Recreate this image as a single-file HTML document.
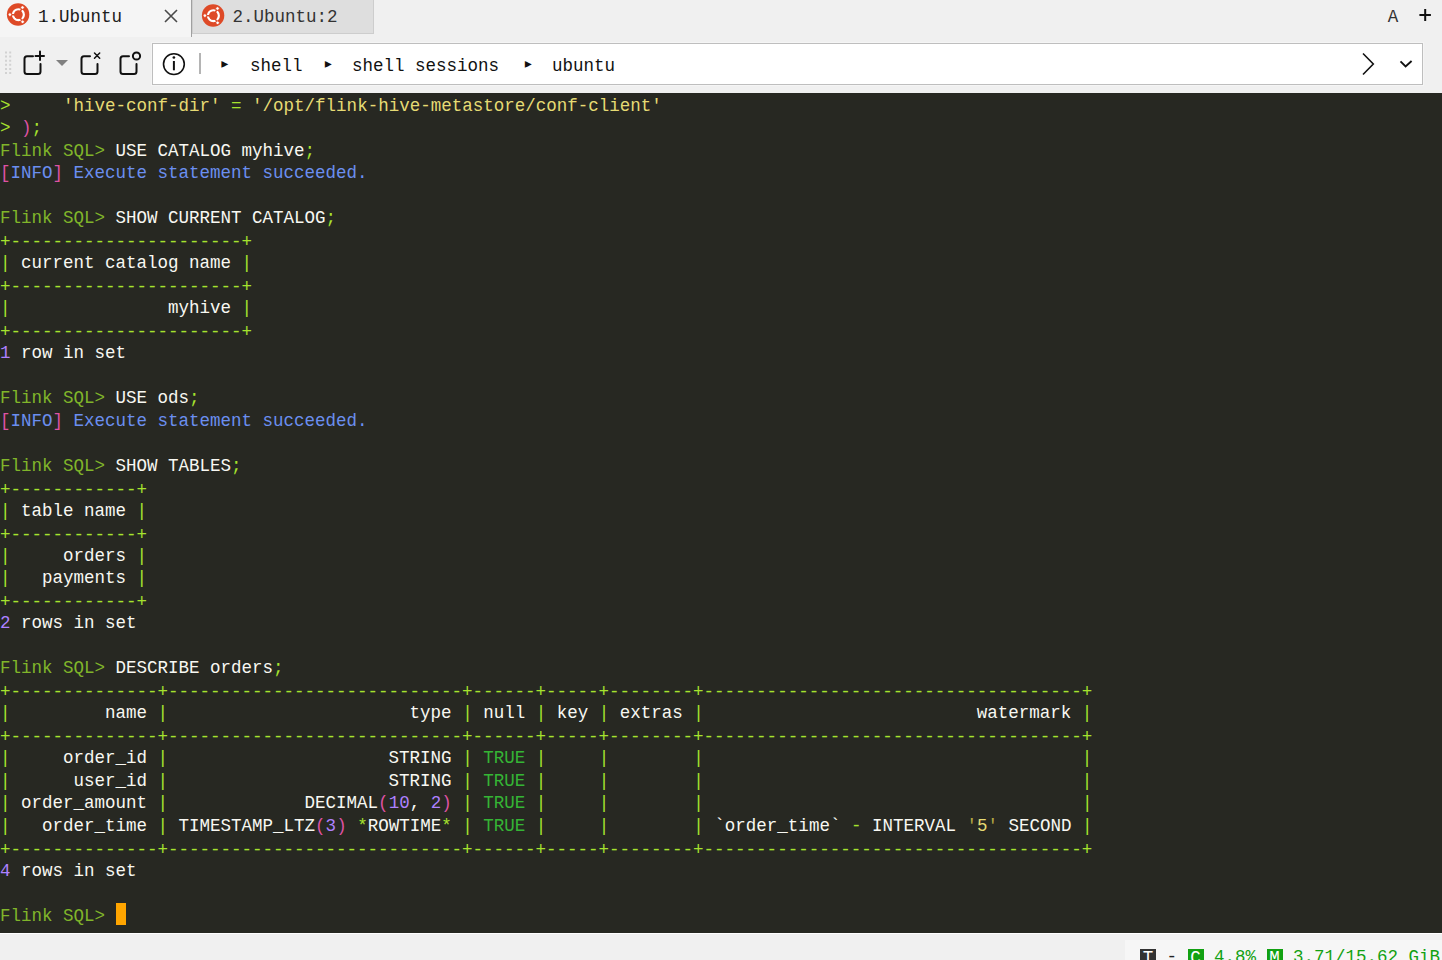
<!DOCTYPE html>
<html lang="en">
<head>
<meta charset="utf-8">
<title>1.Ubuntu</title>
<style>
html,body{margin:0;padding:0;}
body{width:1442px;height:960px;overflow:hidden;background:#f0f0f0;position:relative;
  font-family:"Liberation Mono","Liberation Mono","DejaVu Sans Mono",monospace;font-size:17.5px;color:#1e1e1e;}
.abs{position:absolute;}
#tab1{left:0;top:0;width:191px;height:37px;background:#f5f5f5;}
#tabsep{left:191px;top:0;width:1px;height:37px;background:#a0a0a0;}
#tab2{left:192px;top:0;width:182px;height:34px;background:#dedede;border:1px solid #cdcdcd;border-top:none;box-sizing:border-box;}
.tabtxt{top:5.5px;line-height:23px;white-space:pre;color:#202020;}
#addr{left:152px;top:43px;width:1271px;height:42px;background:#fff;border:1px solid #bebebe;box-sizing:border-box;box-shadow:0 0 0 1px #f5f5f5;}
.crumb{top:54.5px;line-height:23px;white-space:pre;color:#111;}
#term{left:0;top:93px;width:1442px;height:840px;border-bottom:1px solid #fff;background:#272822;overflow:hidden;}
#term pre{margin:0;padding:0;position:absolute;left:0;top:1.5px;font:inherit;line-height:22.5px;color:#f8f8f2;white-space:pre;}
.g{color:#a6e22e}.p{color:#80b52a}.y{color:#e6db74}.b{color:#6b8ff0}.k{color:#de52a2}.v{color:#ae81ff}.t{color:#35b535}.q{color:#b5a642}
.cur{background:#ffa500;display:inline-block;width:10px;height:22px;vertical-align:top;position:relative;top:-2px;left:0.5px}
.br{position:relative;top:1.5px}
#status{left:1125px;top:940px;width:317px;height:20px;background:#f6f6f6;}
.st{top:945.5px;line-height:23px;white-space:pre;color:#12a112;}
.bx{display:inline-block;width:16px;text-align:center;color:#fff;background:#12a112;height:18px;line-height:18px;margin-top:3.5px;vertical-align:top}
</style>
</head>
<body>
<div id="tab1" class="abs"></div>
<div id="tabsep" class="abs"></div>
<div id="tab2" class="abs"></div>
<svg class="abs" style="left:4px;top:0px" width="30" height="30" viewBox="0 0 30 30"><circle cx="14.1" cy="14.5" r="11.2" fill="#de4a27"/><circle cx="14.4" cy="14.7" r="5.35" fill="none" stroke="#fff" stroke-width="2.4"/><path d="M14.4 14.7 L6 14.7 M14.4 14.7 L18.6 7.4 M14.4 14.7 L18.6 22" stroke="#de4a27" stroke-width="1.5" fill="none"/><circle cx="14.4" cy="14.7" r="4.1" fill="#de4a27"/><g fill="#fff" stroke="#de4a27" stroke-width="0.9"><circle cx="5.9" cy="14.6" r="1.8"/><circle cx="18.5" cy="7.5" r="1.8"/><circle cx="18.6" cy="21.8" r="1.8"/></g></svg>
<div class="abs tabtxt" style="left:38px">1.Ubuntu</div>
<svg class="abs" style="left:162.600px;top:7.500px" width="16" height="16" viewBox="0 0 16 16"><path d="M2 2 L14 14 M14 2 L2 14" stroke="#4a4a4a" stroke-width="1.6" fill="none"/></svg>
<svg class="abs" style="left:198.8px;top:0.5px" width="30" height="30" viewBox="0 0 30 30"><circle cx="14.1" cy="14.5" r="11.2" fill="#de4a27"/><circle cx="14.4" cy="14.7" r="5.35" fill="none" stroke="#fff" stroke-width="2.4"/><path d="M14.4 14.7 L6 14.7 M14.4 14.7 L18.6 7.4 M14.4 14.7 L18.6 22" stroke="#de4a27" stroke-width="1.5" fill="none"/><circle cx="14.4" cy="14.7" r="4.1" fill="#de4a27"/><g fill="#fff" stroke="#de4a27" stroke-width="0.9"><circle cx="5.9" cy="14.6" r="1.8"/><circle cx="18.5" cy="7.5" r="1.8"/><circle cx="18.6" cy="21.8" r="1.8"/></g></svg>
<div class="abs tabtxt" style="left:232.500px;color:#333">2.Ubuntu:2</div>
<div class="abs tabtxt" style="left:1387.700px;color:#333">A</div>
<svg class="abs" style="left:1418px;top:7.800px" width="14" height="14" viewBox="0 0 14 14"><path d="M7.200 1 V13 M1.400 7 H12.900" stroke="#111" stroke-width="2" fill="none"/></svg>

<svg class="abs" style="left:0;top:37px" width="152" height="56" viewBox="0 37 152 56" fill="none" stroke="#111" stroke-width="2" stroke-linecap="round" stroke-linejoin="round">
  <g stroke="#d2d2d2" stroke-width="2" stroke-dasharray="2 2.100" stroke-linecap="butt"><path d="M6 51.500 V76 M10.200 51.500 V76"/></g>
  <path d="M33 56.2 H27 Q24.500 56.2 24.500 58.700 V71.500 Q24.500 74 27 74 H38 Q40.500 74 40.500 71.500 V64"/>
  <path d="M40 51.500 V60 M35.500 56 H44"/>
  <path d="M56 60 H68 L62 66 Z" fill="#808080" stroke="none"/>
  <path d="M90 56.2 H84 Q81.500 56.2 81.500 58.700 V71.500 Q81.500 74 84 74 H95 Q97.500 74 97.500 71.500 V64"/>
  <path d="M94.500 53 L99.700 58.200 M99.700 53 L94.500 58.200" stroke-width="1.5"/>
  <path d="M129 56.2 H123 Q120.500 56.2 120.500 58.700 V71.500 Q120.500 74 123 74 H134 Q136.500 74 136.500 71.500 V64"/>
  <circle cx="136.500" cy="56" r="3.600"/>
</svg>
<div id="addr" class="abs"></div>
<svg class="abs" style="left:160px;top:50px" width="28" height="28" viewBox="0 0 28 28" fill="none" stroke="#111" stroke-width="1.6"><circle cx="13.900" cy="14.100" r="10.400"/><path d="M13.900 11 V20.300" stroke-width="2"/><circle cx="13.900" cy="7.500" r="1.350" fill="#111" stroke="none"/></svg>
<div class="abs" style="left:199px;top:53px;width:2px;height:21px;background:#b4b4b4"></div>
<div class="abs crumb" style="left:219.500px;top:53px;font-size:17.5px">&#9656;</div>
<div class="abs crumb" style="left:250px">shell</div>
<div class="abs crumb" style="left:323px;top:53px;font-size:17.5px">&#9656;</div>
<div class="abs crumb" style="left:352px">shell sessions</div>
<div class="abs crumb" style="left:523px;top:53px;font-size:17.5px">&#9656;</div>
<div class="abs crumb" style="left:552px">ubuntu</div>
<svg class="abs" style="left:1355px;top:48px" width="60" height="32" viewBox="0 0 60 32" fill="none" stroke="#111" stroke-width="1.6"><path d="M8 5.500 L18.300 16 L8 26.500"/><path d="M45.500 13.300 L50.600 18.400 L56.600 13" stroke-width="1.9"/></svg>

<div id="term" class="abs"><pre><span class="g">&gt;</span>     <span class="y">'hive-conf-dir'</span> <span class="g">=</span> <span class="y">'/opt/flink-hive-metastore/conf-client'</span>
<span class="g">&gt;</span> <span class="k">)</span><span class="g">;</span>
<span class="p">Flink SQL&gt;</span> USE CATALOG myhive<span class="g">;</span>
<span class="k">[</span><span class="b">INFO</span><span class="k">]</span> <span class="b">Execute statement succeeded.</span>

<span class="p">Flink SQL&gt;</span> SHOW CURRENT CATALOG<span class="g">;</span>
<span class="g br">+----------------------+</span>
<span class="g">|</span> current catalog name <span class="g">|</span>
<span class="g br">+----------------------+</span>
<span class="g">|</span>               myhive <span class="g">|</span>
<span class="g br">+----------------------+</span>
<span class="v">1</span> row in set

<span class="p">Flink SQL&gt;</span> USE ods<span class="g">;</span>
<span class="k">[</span><span class="b">INFO</span><span class="k">]</span> <span class="b">Execute statement succeeded.</span>

<span class="p">Flink SQL&gt;</span> SHOW TABLES<span class="g">;</span>
<span class="g br">+------------+</span>
<span class="g">|</span> table name <span class="g">|</span>
<span class="g br">+------------+</span>
<span class="g">|</span>     orders <span class="g">|</span>
<span class="g">|</span>   payments <span class="g">|</span>
<span class="g br">+------------+</span>
<span class="v">2</span> rows in set

<span class="p">Flink SQL&gt;</span> DESCRIBE orders<span class="g">;</span>
<span class="g br">+--------------+----------------------------+------+-----+--------+------------------------------------+</span>
<span class="g">|</span>         name <span class="g">|</span>                       type <span class="g">|</span> null <span class="g">|</span> key <span class="g">|</span> extras <span class="g">|</span>                          watermark <span class="g">|</span>
<span class="g br">+--------------+----------------------------+------+-----+--------+------------------------------------+</span>
<span class="g">|</span>     order_id <span class="g">|</span>                     STRING <span class="g">|</span> <span class="t">TRUE</span> <span class="g">|</span>     <span class="g">|</span>        <span class="g">|</span>                                    <span class="g">|</span>
<span class="g">|</span>      user_id <span class="g">|</span>                     STRING <span class="g">|</span> <span class="t">TRUE</span> <span class="g">|</span>     <span class="g">|</span>        <span class="g">|</span>                                    <span class="g">|</span>
<span class="g">|</span> order_amount <span class="g">|</span>             DECIMAL<span class="k">(</span><span class="v">10</span>, <span class="v">2</span><span class="k">)</span> <span class="g">|</span> <span class="t">TRUE</span> <span class="g">|</span>     <span class="g">|</span>        <span class="g">|</span>                                    <span class="g">|</span>
<span class="g">|</span>   order_time <span class="g">|</span> TIMESTAMP_LTZ<span class="k">(</span><span class="v">3</span><span class="k">)</span> <span class="g">*</span>ROWTIME<span class="g">*</span> <span class="g">|</span> <span class="t">TRUE</span> <span class="g">|</span>     <span class="g">|</span>        <span class="g">|</span> `order_time` <span class="g">-</span> INTERVAL <span class="q">'</span><span class="y">5</span><span class="q">'</span> SECOND <span class="g">|</span>
<span class="g br">+--------------+----------------------------+------+-----+--------+------------------------------------+</span>
<span class="v">4</span> rows in set

<span class="p">Flink SQL&gt;</span> <span class="cur"> </span></pre></div>

<div id="status" class="abs"></div>
<div class="abs st" style="left:1140px"><span class="bx" style="background:#333">T</span><span style="color:#222"> - </span><span class="bx">C</span> 4.8% <span class="bx">M</span> 3.71/15.62 GiB</div>
</body>
</html>
